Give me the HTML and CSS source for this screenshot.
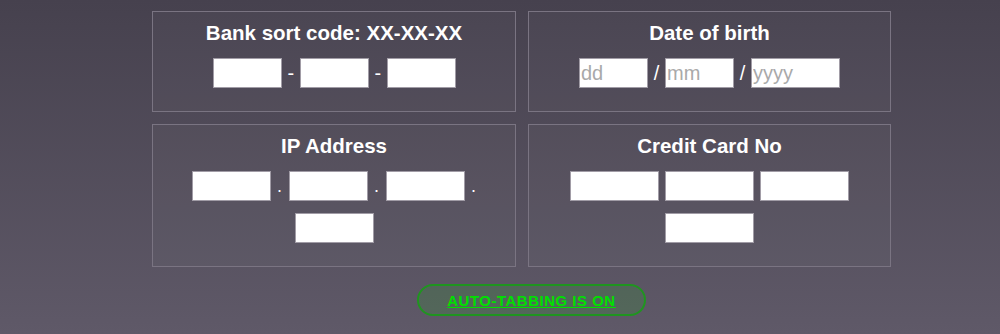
FILE: index.html
```html
<!DOCTYPE html>
<html>
<head>
<meta charset="utf-8">
<link rel="stylesheet" href="styles.css">
</head>
<body>
<div class="page">
  <div class="grid">
    <section class="box box-short">
      <h2 class="title">Bank sort code: XX-XX-XX</h2>
      <div class="row sep-row">
        <input class="field w69" type="text">
        <span class="sep">-</span>
        <input class="field w69" type="text">
        <span class="sep">-</span>
        <input class="field w69" type="text">
      </div>
    </section>
    <section class="box box-short">
      <h2 class="title">Date of birth</h2>
      <div class="row sep-row date-row">
        <input class="field w69" type="text" placeholder="dd">
        <span class="sep">/</span>
        <input class="field w69" type="text" placeholder="mm">
        <span class="sep">/</span>
        <input class="field w89" type="text" placeholder="yyyy">
      </div>
    </section>
    <section class="box box-tall">
      <h2 class="title">IP Address</h2>
      <div class="row sep-row">
        <input class="field w79" type="text">
        <span class="sep dot">.</span>
        <input class="field w79" type="text">
        <span class="sep dot">.</span>
        <input class="field w79" type="text">
        <span class="sep dot">.</span>
      </div>
      <div class="row row2">
        <input class="field w79" type="text">
      </div>
    </section>
    <section class="box box-tall">
      <h2 class="title">Credit Card No</h2>
      <div class="row card-row">
        <input class="field w89" type="text">
        <input class="field w89" type="text">
        <input class="field w89" type="text">
      </div>
      <div class="row row2">
        <input class="field w89" type="text">
      </div>
    </section>
  </div>
  <div class="toggle-wrap">
    <a class="toggle" href="#">AUTO-TABBING IS ON</a>
  </div>
</div>
</body>
</html>
```

FILE: styles.css
```css
html, body {
  margin: 0;
  padding: 0;
  height: 100%;
}
body {
  background: linear-gradient(to bottom, #46414e 0%, #5f5968 100%);
  font-family: "Liberation Sans", Arial, sans-serif;
  color: #fff;
  overflow: hidden;
}
.page {
  padding: 11px 0 0 152px;
}
.grid {
  display: grid;
  grid-template-columns: 364px 363px;
  column-gap: 12px;
  row-gap: 12px;
  width: 739px;
}
.box {
  border: 1px solid #7a7482;
  background: rgba(255, 255, 255, 0.025);
  box-sizing: border-box;
  display: flex;
  flex-direction: column;
  align-items: center;
}
.box-short {
  height: 101px;
  padding-top: 9px;
}
.box-tall {
  height: 143px;
  padding-top: 9px;
}
.title {
  margin: 0;
  font-size: 20.5px;
  line-height: 23px;
  font-weight: bold;
  color: #fff;
}
.row {
  display: flex;
  align-items: center;
  justify-content: center;
}
.sep-row {
  margin-top: 14px;
  gap: 6px;
}
.date-row {
  gap: 5px;
}
.date-row .sep {
  width: 7px;
}
.card-row {
  margin-top: 14px;
  gap: 6px;
}
.row2 {
  margin-top: 12px;
}
.sep {
  width: 6px;
  height: 30px;
  text-align: center;
  font-size: 20px;
  line-height: 30px;
  color: #fff;
}
.dot {
  font-size: 18px;
}
.field {
  box-sizing: border-box;
  height: 30px;
  margin: 0;
  padding: 0 1px;
  border: 1px solid #a19ca6;
  background: #fff;
  font-family: "Liberation Sans", Arial, sans-serif;
  font-size: 20px;
  color: #333;
  outline: none;
}
.field::placeholder {
  color: #a9a9a9;
}
.w69 { width: 69px; }
.w79 { width: 79px; }
.w89 { width: 89px; }
.toggle-wrap {
  display: flex;
  margin-top: 17px;
  padding-left: 265px;
}
.toggle {
  box-sizing: border-box;
  width: 229px;
  height: 32px;
  border: 2px solid #1f951f;
  border-radius: 16px;
  background: rgba(40, 170, 40, 0.18);
  display: flex;
  align-items: center;
  justify-content: center;
  font-size: 15px;
  font-weight: bold;
  color: #00e000;
  text-decoration: underline;
  letter-spacing: 0.5px;
}
```
